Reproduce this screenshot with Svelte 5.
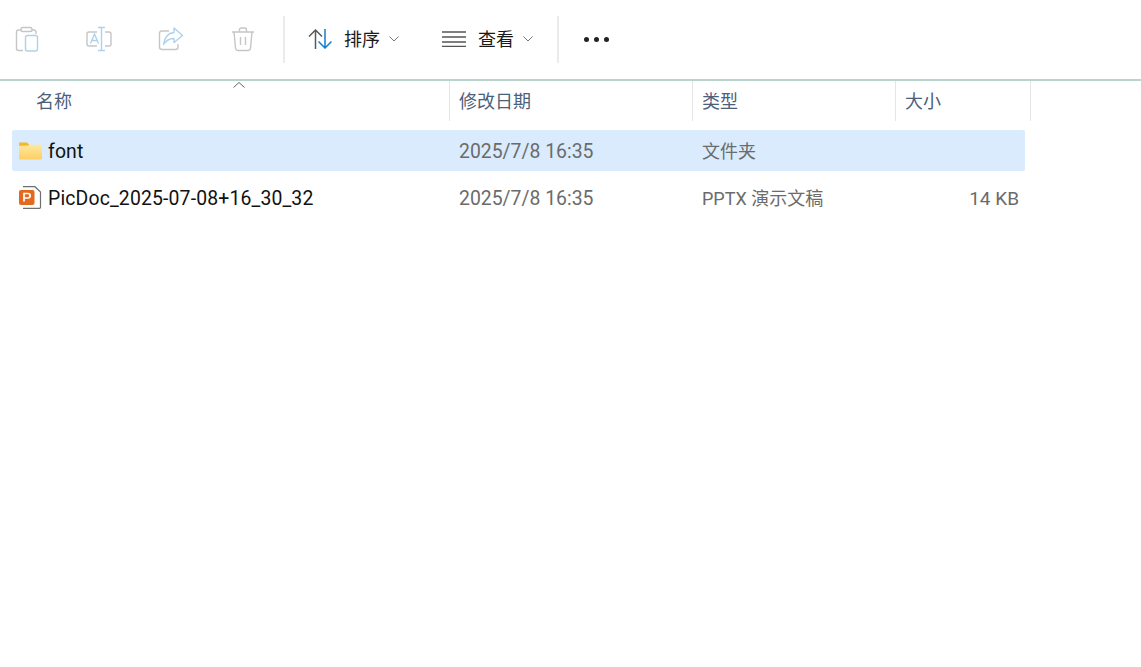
<script>
	const columns = ['修改日期', '类型', '大小']
	const files = [
		{ name: 'font', date: '2025/7/8 16:35', type: '文件夹', size: '', kind: 'folder', selected: true },
		{ name: 'PicDoc_2025-07-08+16_30_32', date: '2025/7/8 16:35', type: 'PPTX 演示文稿', size: '14 KB', kind: 'pptx', selected: false }
	]
</script>

<main>
	<div class="toolbar">
		<button class="icon-btn" aria-label="粘贴">
			<svg width="28" height="28" viewBox="0 0 28 28" fill="none" stroke-width="1.4">
				<path d="M8 5H5.500Q3.500 5 3.500 7V23.500Q3.500 25.500 5.500 25.500H10M19 5H21Q23 5 23 7V9" stroke="#c6c6c6"/>
				<rect x="8" y="2.500" width="11" height="4" rx="1.800" stroke="#c6c6c6"/>
				<rect x="12.500" y="10.500" width="12" height="15.500" rx="2" stroke="#acd2ee"/>
			</svg>
		</button>
		<button class="icon-btn" aria-label="重命名">
			<svg width="28" height="28" viewBox="0 0 28 28" fill="none" stroke-width="1.4">
				<path d="M12 7H4Q2 7 2 9V19Q2 21 4 21H12M20 7H24Q26 7 26 9V19Q26 21 24 21H20" stroke="#c6c6c6"/>
				<path d="M13 2.500H20M16.500 2.500V25.500M13 25.500H20" stroke="#acd2ee"/>
				<path d="M5.500 18.500L9.500 9L13.500 18.500M7 15.500H12" stroke="#acd2ee"/>
			</svg>
		</button>
		<button class="icon-btn" aria-label="共享">
			<svg width="28" height="28" viewBox="0 0 28 28" fill="none" stroke-width="1.4">
				<path d="M12 6H5Q2.500 6 2.500 8.500V22Q2.500 24.500 5 24.500H18.500Q21 24.500 21 22V19" stroke="#c6c6c6"/>
				<path d="M17 3L25.500 10.500L17 17.500V13.500C12 13.500 9 15.500 6.500 19.500C7.500 12.500 11 8 17 7.500Z" stroke="#acd2ee" stroke-linejoin="round"/>
			</svg>
		</button>
		<button class="icon-btn" aria-label="删除">
			<svg width="28" height="28" viewBox="0 0 28 28" fill="none" stroke-width="1.4" stroke="#c6c6c6">
				<path d="M3 7H25M10.500 7V5Q10.500 3 12.500 3H15.500Q17.500 3 17.500 5V7"/>
				<path d="M5 7L6.500 23Q6.700 25.500 9 25.500H19Q21.300 25.500 21.500 23L23 7"/>
				<path d="M11.500 12V20M16.500 12V20"/>
			</svg>
		</button>
		<span class="sep"></span>
		<button class="menu-btn sort">
			<svg width="24" height="20" viewBox="0 0 24 20" fill="none" stroke-width="1.500">
				<path d="M7.500 20V1M1 7.500L7.500 1L14 7.500" stroke="#5a5a5a"/>
				<path d="M17 0V19M10.500 12.500L17 19L23.500 12.500" stroke="#0f7fd0"/>
			</svg>
			<span class="label">排序</span>
			<svg class="chev" width="10" height="6" viewBox="0 0 10 6" fill="none" stroke="#777" stroke-width="1"><path d="M.5 .5L5 5L9.500 .5"/></svg>
		</button>
		<button class="menu-btn view">
			<svg width="24" height="16" viewBox="0 0 24 16" fill="none" stroke="#555" stroke-width="1.300">
				<path d="M0 1H24M0 6H24M0 11H24M0 15.500H24"/>
			</svg>
			<span class="label">查看</span>
			<svg class="chev" width="10" height="6" viewBox="0 0 10 6" fill="none" stroke="#777" stroke-width="1"><path d="M.5 .5L5 5L9.500 .5"/></svg>
		</button>
		<span class="sep second"></span>
		<button class="more" aria-label="更多"><i></i><i></i><i></i></button>
	</div>

	<div class="header">
		<div class="col name-col">名称
			<svg class="sort-mark" width="12" height="6" viewBox="0 0 12 6" fill="none" stroke="#666" stroke-width="1"><path d="M.5 5.500L6 .5L11.500 5.500"/></svg>
		</div>
		{#each columns as col}
			<div class="col">{col}</div>
		{/each}
	</div>

	<div class="list">
		{#each files as file}
			<div class="row" class:selected={file.selected}>
				<div class="name">
					{#if file.kind === 'folder'}
						<svg width="23" height="18" viewBox="0 0 23 18">
							<defs>
								<linearGradient id="fold" x1="0" y1="0" x2="0" y2="1">
									<stop offset="0" stop-color="#ffe89c"/>
									<stop offset="1" stop-color="#fccf62"/>
								</linearGradient>
							</defs>
							<path d="M0 1.500Q0 .5 1 .5H8L10.500 3H22Q23 3 23 4V8H0Z" fill="#f4b72e"/>
							<path d="M0 3.800H8.500L10.500 2.800H22Q23 2.800 23 3.800V16.500Q23 17.500 22 17.500H1Q0 17.500 0 16.500Z" fill="url(#fold)"/>
						</svg>
					{:else}
						<svg width="23" height="23" viewBox="0 0 23 23">
							<path d="M4 .7H16L21.500 6V21.300Q21.500 22.300 20.500 22.300H4" fill="#fff" stroke="#6f6f6f" stroke-width="1.200"/>
							<rect x="0" y="4" width="15.500" height="15" rx="2" fill="#e3691f"/>
							<path d="M5 15.500V7.500H8.800Q11.200 7.500 11.200 9.800Q11.200 12 8.800 12H5" fill="none" stroke="#fff" stroke-width="1.700"/>
						</svg>
					{/if}
					<span class="filename">{file.name}</span>
				</div>
				<div class="cell date">{file.date}</div>
				<div class="cell type">{file.type}</div>
				<div class="cell size">{file.size}</div>
			</div>
		{/each}
	</div>
</main>

<style>
	:global(body) {
		background: #fff;
	}
	main {
		width: 1141px;
		height: 667px;
		overflow: hidden;
		background: #fff;
		font-family: "Roboto", "Noto Sans CJK SC", sans-serif;
		font-size: 18px;
	}
	button {
		border: 0;
		background: none;
		padding: 0;
		font: inherit;
		color: #1a1a1a;
		display: flex;
		align-items: center;
	}
	.toolbar {
		box-sizing: border-box;
		border-bottom: 2px solid #b8d4cd;
		height: 81px;
		display: flex;
		align-items: center;
		padding: 0 0 1px 13px;
	}
	.icon-btn {
		width: 28px;
		height: 28px;
		margin-right: 44px;
	}
	.sep {
		width: 2px;
		height: 47px;
		background: #ebebeb;
		margin-left: -18px;
	}
	.sep.second {
		margin-left: 24px;
	}
	.menu-btn {
		gap: 12px;
		height: 40px;
	}
	.label {
		margin-bottom: 2px;
	}
	.sort {
		margin-left: 23px;
	}
	.view {
		margin-left: 43px;
	}
	.chev {
		margin-left: -3px;
	}
	.more {
		margin-left: 25px;
		gap: 5px;
	}
	.more i {
		display: block;
		width: 5px;
		height: 5px;
		border-radius: 50%;
		background: #222;
	}
	.header {
		display: grid;
		grid-template-columns: 450px 243px 203px 135px;
		height: 40px;
		color: #4c607a;
	}
	.col {
		position: relative;
		display: flex;
		align-items: center;
		padding: 0 0 2px 9px;
		border-right: 1px solid #e5e5e5;
	}
	.name-col {
		padding-left: 36px;
	}
	.sort-mark {
		position: absolute;
		left: 233px;
		top: 1px;
	}
	.list {
		display: flex;
		flex-direction: column;
		gap: 6px;
		margin: 9px 0 0 12px;
		width: 1013px;
	}
	.row {
		display: grid;
		grid-template-columns: 438px 243px 203px 129px;
		height: 41px;
		align-items: center;
		color: #6b6b6b;
		border-radius: 2px;
		font-size: 19.4px;
	}
	.row.selected {
		background: #d9ebfc;
	}
	.name {
		display: flex;
		align-items: center;
		gap: 6px;
		padding-left: 7px;
		color: #111;
	}
	.filename {
		letter-spacing: .15px;
		padding-top: 2px;
	}
	.cell {
		padding-left: 9px;
	}
	.date {
		padding-top: 2px;
	}
	.type {
		font-size: 18px;
		padding-bottom: 2px;
	}
	.size {
		font-size: 19px;
		text-align: right;
		padding: 2px 6px 0 0;
	}
</style>
